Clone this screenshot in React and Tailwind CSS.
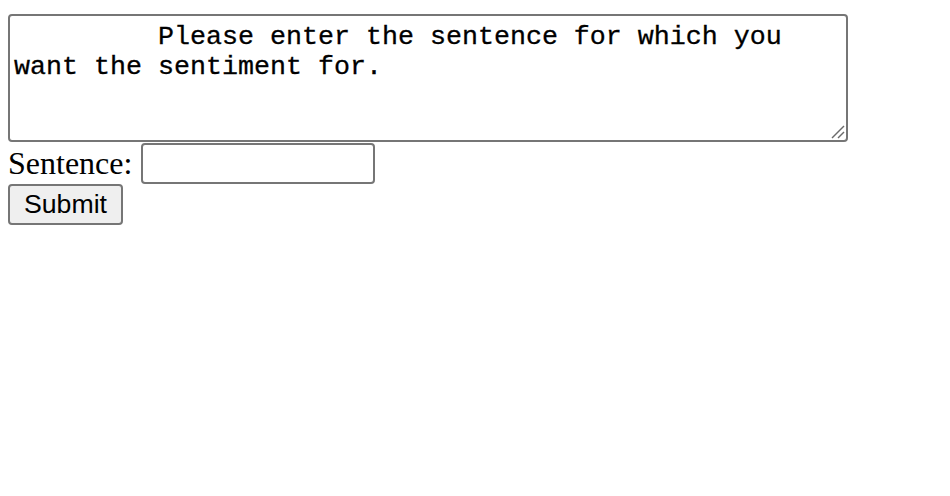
import React from "react";

export default function App() {
  return (
    <div className="min-h-[496px] w-[950px] bg-white pl-2 pt-[14px]">
      <div className="relative h-[128px] w-[840px]">
        <textarea
          className="block h-[128px] w-[840px] resize-none rounded-[4px] border-2 border-[#767676] bg-white px-1 pb-1 pt-[6px] text-[26.67px] leading-[30px] text-black outline-none"
          style={{ fontFamily: '"Liberation Mono", "Courier New", monospace', WebkitTextStroke: "0.3px black" }}
          defaultValue={"         Please enter the sentence for which you want the sentiment for."}
        />
        <svg
          className="pointer-events-none absolute bottom-[3px] right-[3px]"
          width="14"
          height="14"
          viewBox="0 0 14 14"
        >
          <line x1="1" y1="13" x2="13" y2="1" stroke="#6b6b6b" strokeWidth="1.5" />
          <line x1="7" y1="13" x2="13" y2="7" stroke="#6b6b6b" strokeWidth="1.5" />
        </svg>
      </div>
      <div className="flex h-[42px] items-center gap-[9px]">
        <span
          className="text-[32px] leading-[36px] text-black"
          style={{ fontFamily: '"Liberation Serif", "Times New Roman", serif' }}
        >
          Sentence:
        </span>
        <input
          type="text"
          className="h-[41px] w-[234px] rounded-[4px] border-2 border-[#767676] bg-white px-1 outline-none"
        />
      </div>
      <button
        className="flex h-[41px] w-[115px] items-center justify-center rounded-[4px] border-2 border-[#767676] bg-[#efefef] text-[26.67px] leading-none text-black"
        style={{ fontFamily: '"Liberation Sans", Arial, sans-serif' }}
      >
        Submit
      </button>
    </div>
  );
}
